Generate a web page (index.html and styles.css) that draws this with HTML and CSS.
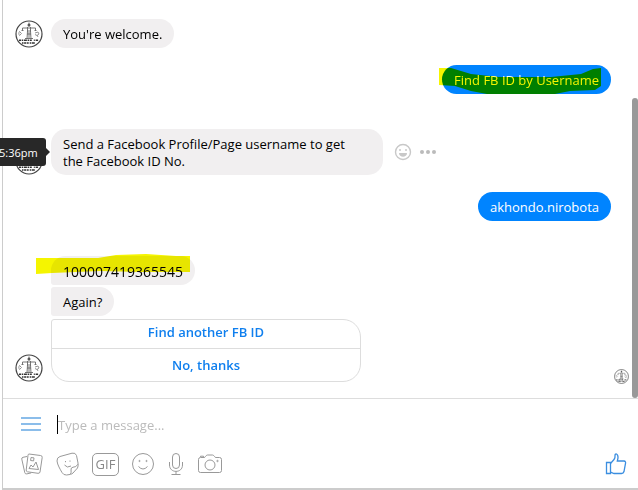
FILE: index.html
```
<!DOCTYPE html>
<html lang="en">
<head>
    <meta charset="UTF-8">
    <meta name="viewport" content="width=device-width, initial-scale=1.0">
    <title>Messenger</title>
    <link rel="stylesheet" href="styles.css">
</head>
<body>
    <svg width="0" height="0" class="sprite" aria-hidden="true">
        <symbol id="seal" viewBox="0 0 28 28">
            <circle cx="14" cy="14" r="13" fill="#fff" stroke="#444" stroke-width="1.2"/>
            <g fill="none" stroke="#666" stroke-width=".9">
                <path d="M7.500 8h13M14 2.500v4M12.500 7v4l-.5 8M15.500 7v4l.5 8M14 12v6M10 18.500h8M12 11h4M12 14h4"/>
                <path d="M7.500 8v2.500M20.500 8v2.500M6.500 10.500h2M19.500 10.500h2"/>
                <path d="M5 11c-2 2-1 4 0 5M5 12l1.500 1.500L5 15M20 13l3-1 1 2-2 1.500-2-1M22 15l1 2" stroke="#888"/>
                <path d="M4 20.300h2m.7 0h1.500m.7 0h3m.7 0h1.500m.7 0h2m2 0h1m.8 0h2.500" stroke="#333" stroke-width="1.600"/>
                <path d="M7 23h1.500m.6 0h2m.6 0h2m1 0h1.500m.6 0h3" stroke="#333" stroke-width="1.600"/>
            </g>
            <circle cx="14" cy="5" r="1.500" fill="#555"/>
        </symbol>
    </svg>

    <div class="chat">
        <main class="messages">
            <div class="row">
                <svg class="avatar"><use href="#seal"/></svg>
                <p class="bubble">You're welcome.</p>
            </div>

            <div class="row mine">
                <p class="bubble">Find FB ID by Username
                    <svg class="marker marker-blue" viewBox="0 0 162 29" aria-hidden="true">
                        <path fill="#f5f500" d="M0 3h12l20 6 28 3h52l30-3 12-5 8-1v18l-6 4-25 1-15 3H48L32 26 16 21 0 20z"/>
                    </svg>
                </p>
            </div>

            <div class="row">
                <svg class="avatar"><use href="#seal"/></svg>
                <span class="time" role="tooltip">5:36pm</span>
                <p class="bubble wide">Send a Facebook Profile/Page username to get<br>the Facebook ID No.</p>
                <div class="tools">
                    <button type="button" aria-label="React">
                        <svg width="18" height="18" viewBox="0 0 18 18" fill="none" stroke="#c8c8c8" stroke-width="1.4">
                            <circle cx="9" cy="9" r="7.5"/>
                            <path d="M5 10h8c0 5-8 5-8 0z" fill="#c8c8c8" stroke="none"/>
                            <circle cx="6" cy="7" r="1" fill="#c8c8c8" stroke="none"/>
                            <circle cx="12" cy="7" r="1" fill="#c8c8c8" stroke="none"/>
                        </svg>
                    </button>
                    <button type="button" aria-label="More">
                        <svg width="16" height="18" viewBox="0 0 16 18" fill="#bbb">
                            <circle cx="2" cy="9" r="2"/><circle cx="8" cy="9" r="2"/><circle cx="14" cy="9" r="2"/>
                        </svg>
                    </button>
                </div>
            </div>

            <div class="row mine">
                <p class="bubble">akhondo.nirobota</p>
            </div>

            <div class="row group">
                <svg class="avatar"><use href="#seal"/></svg>
                <div class="stack">
                    <p class="bubble start">100007419365545
                        <svg class="marker marker-grey" viewBox="0 0 154 20" aria-hidden="true">
                            <path fill="#f5f500" d="M0 4h62l18-3 30-1 30 2h14v16h-50l-40-1-48 2-16 1-20-1H0z"/>
                        </svg>
                    </p>
                    <p class="bubble middle">Again?</p>
                    <div class="card">
                        <button type="button">Find another FB ID</button>
                        <button type="button">No, thanks</button>
                    </div>
                </div>
                <svg class="seen"><use href="#seal"/></svg>
            </div>
            <div class="scrollbar"></div>
        </main>

        <form class="composer">
            <div class="entry">
                <button type="button" aria-label="Menu">
                    <svg width="20" height="16" viewBox="0 0 20 16" stroke="#8bbdea" stroke-width="2">
                        <path d="M0 1h20M0 7h20M0 13h20"/>
                    </svg>
                </button>
                <input type="text" placeholder="Type a message..." aria-label="Type a message">
            </div>
            <div class="actions">
                <button type="button" aria-label="Photos">
                    <svg width="22" height="24" viewBox="0 0 22 24" fill="none" stroke="#999">
                        <path d="M8 2l11.500 1.500q2 .3 1.700 2L19 20q-.3 1.500-2 1.300L6.500 19.800q-1.500-.3-1.300-1.800L7 3.300Q7.200 2 8 2z"/>
                        <path d="M6 4.500L2 5.300Q.4 5.700.8 7.200l3 13.500q.4 1.500 2 1.200l4.400-1M8 16.500l2-3.500 2 2 3-5 2.500 7.500zM10 5.500l3 .4-.4 3-3-.4z"/>
                    </svg>
                </button>
                <button type="button" aria-label="Stickers">
                    <svg width="23" height="24" viewBox="0 0 23 24" fill="none" stroke="#999">
                        <path d="M4 4.500L16 1.200q3.500-.8 4.500 2.300L22 11q.5 3-.5 5l-4.500 5q-1 1-2.500 1.400l-4 .6q-3 .2-4.500-2.500C4 17 1.500 13 1 9Q.8 5.500 4 4.500z"/>
                        <path d="M14.500 22q1-1.500.5-4-.3-2.500 2-2.800 3 .3 5-3M8.500 13q2.500 3.500 6.500 1M9.500 9v1.200M14 8.500v1.200"/>
                    </svg>
                </button>
                <button type="button" class="gif">GIF</button>
                <button type="button" aria-label="Emoji">
                    <svg width="22" height="24" viewBox="1 0 22 24" fill="none" stroke="#999">
                        <circle cx="12" cy="12" r="10.500"/>
                        <path d="M7.500 14.500q4.500 5 9 0"/>
                        <circle cx="8.500" cy="9" r=".6"/><circle cx="15.500" cy="9" r=".6"/>
                    </svg>
                </button>
                <button type="button" aria-label="Voice">
                    <svg width="18" height="24" viewBox="-1 0 18 24" fill="none" stroke="#999">
                        <rect x="4.500" y="1.500" width="7" height="15" rx="3.500"/>
                        <path d="M1.500 10v3c0 8.500 13 8.500 13 0v-3M8 19.500V22M3.500 22.500h9"/>
                    </svg>
                </button>
                <button type="button" aria-label="Camera">
                    <svg width="24" height="24" viewBox="0 0 24 24" fill="none" stroke="#999">
                        <path d="M2.500 5.500H6q1 0 1.500-1L8 4q.5-1 1.500-1h5q1 0 1.500 1l.5.5q.5 1 1.500 1h3.500q2 0 2 2v11q0 2-2 2h-19q-2 0-2-2v-11q0-2 2-2zM2.500 5V4.200h3V5"/>
                        <circle cx="12" cy="13" r="5"/><circle cx="19.500" cy="9" r=".7"/>
                    </svg>
                </button>
                <button type="button" class="like" aria-label="Like">
                    <svg width="22" height="24" viewBox="0 0 22 24" fill="none" stroke="#3b8ee0" stroke-width="1.300">
                        <path d="M1.500 10.500h4v11h-4z"/>
                        <path d="M5.500 11.500L9 7.500q1.300-1.500 1-3.500Q10 1.500 11.500 2q1.700.8 1.500 4l-.7 3H19q2 .3 1.500 2.500l-1.500 8q-.5 2-2.500 2H9l-3.500-1.300"/>
                    </svg>
                </button>
            </div>
        </form>
    </div>
</body>
</html>
```
FILE: styles.css
```
* {
    box-sizing: border-box;
}

body {
    margin: 0;
    background: #fff;
    color: #000;
    font-family: "Open Sans", "Noto Sans", sans-serif;
    font-size: 13px;
    line-height: 17px;
    overflow: hidden;
}

button {
    padding: 0;
    border: 0;
    background: none;
    font: inherit;
    cursor: pointer;
}

svg {
    display: block;
}

.sprite {
    position: absolute;
}

.chat {
    display: flex;
    flex-direction: column;
    min-height: 100vh;
    margin-left: 2px;
    border-left: 1px solid #ccc;
    border-bottom: 2px solid #ccc;
}

.messages {
    position: relative;
    flex: 1;
    display: flex;
    flex-direction: column;
    gap: 17px;
    padding: 19px 27px 16px 12px;
}

.row {
    position: relative;
    display: flex;
    align-items: flex-end;
    gap: 8px;
}

.avatar {
    width: 28px;
    height: 28px;
    flex: none;
}

.bubble {
    position: relative;
    margin: 0;
    padding: 7px 12px 5px;
    border-radius: 15px;
    background: #f1eff0;
}

.mine {
    justify-content: flex-end;
}

.mine .bubble {
    background: #0084ff;
    color: #fff;
}

.row:nth-child(3),
.group {
    margin-top: 18px;
}

.wide {
    width: 332px;
}

/* highlighter strokes over the bubbles */
.marker {
    position: absolute;
    mix-blend-mode: multiply;
}

.marker-blue {
    right: 10px;
    top: 0;
    width: 162px;
    height: 29px;
}

.marker-grey {
    left: -15px;
    top: -2px;
    width: 154px;
    height: 20px;
}

.time {
    position: absolute;
    left: -24px;
    top: 9px;
    padding: 6px 8px 5px;
    border-radius: 3px;
    background: #282828;
    color: #fff;
    font-size: 11px;
}

.time::after {
    content: "";
    position: absolute;
    left: 100%;
    top: 10px;
    border: 4px solid transparent;
    border-left-color: #282828;
    border-right: 0;
}

.tools {
    display: flex;
    align-self: center;
    gap: 8px;
    margin-left: 3px;
}

.stack {
    display: flex;
    flex-direction: column;
    align-items: flex-start;
    gap: 2px;
    width: 310px;
}

.start {
    border-bottom-left-radius: 3px;
    font-size: 14px;
}

.middle {
    border-top-left-radius: 3px;
    border-bottom-left-radius: 3px;
}

.card {
    display: flex;
    flex-direction: column;
    width: 100%;
    margin-top: 1px;
    border: 1px solid #ddd;
    border-radius: 3px 18px 18px 18px;
    overflow: hidden;
}

.card button {
    height: 28px;
    padding-bottom: 4px;
    color: #0f7fee;
    font-weight: 600;
}

.card button + button {
    height: 33px;
    padding-bottom: 0;
    border-top: 1px solid #ddd;
}

.seen {
    position: absolute;
    right: -18px;
    bottom: -2px;
    width: 15px;
    height: 15px;
}

.scrollbar {
    position: absolute;
    top: 98px;
    right: 0;
    bottom: 0;
    width: 6px;
    border-radius: 3px;
    background: #999;
}

.composer {
    display: flex;
    flex-direction: column;
    gap: 18px;
    padding: 16px 11px 12px 18px;
    border-top: 1px solid #ddd;
}

.entry {
    display: flex;
    align-items: center;
    gap: 16px;
}

.entry input {
    flex: 1;
    height: 19px;
    padding: 0;
    border: 0;
    border-left: 1px solid #000;
    outline: 0;
    font: inherit;
}

.entry input::placeholder {
    color: #bbb;
    opacity: 1;
}

.actions {
    display: flex;
    align-items: center;
    gap: 13px;
}

.gif {
    width: 27px;
    height: 23px;
    border: 1px solid #999;
    border-radius: 5px;
    color: #888;
}

.like {
    margin-left: auto;
}
```
